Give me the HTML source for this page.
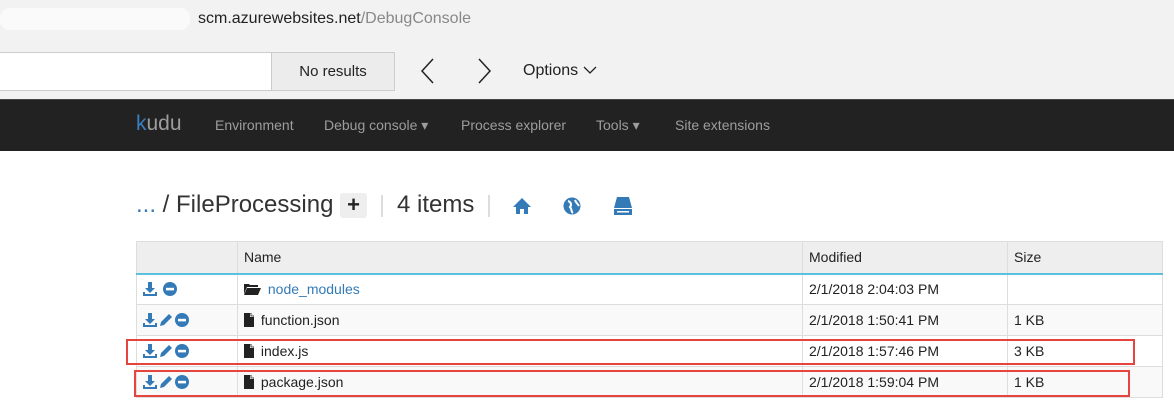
<!DOCTYPE html>
<html><head><style>
*{margin:0;padding:0;box-sizing:border-box}
body{width:1174px;height:415px;overflow:hidden;background:#fff;font-family:"Liberation Sans",Arial,sans-serif;position:relative}
.top{position:absolute;left:0;top:0;width:1174px;height:99px;background:#f2f2f2}
.url{position:absolute;left:198px;top:10px;font-size:16px;color:#222}
.url span{color:#888}
.blur{position:absolute;left:0;top:8px;width:190px;height:22px;background:#fafafa;border-radius:10px}
.search{position:absolute;left:-2px;top:52px;width:274px;height:39px;background:#fff;border:1px solid #ccc}
.nores{position:absolute;left:271px;top:52px;width:124px;height:39px;background:#ececec;border:1px solid #ccc;font-size:15px;color:#222;text-align:center;line-height:37px}
.opt{position:absolute;left:523px;top:62px;font-size:16px;color:#222}
.nav{position:absolute;left:0;top:99px;width:1174px;height:52px;background:#222;border-top:1px solid #444}
.nav div{position:absolute;top:17px;font-size:14px;color:#9d9d9d}
.crumb{position:absolute;top:191px;font-size:24px;color:#333}
.plus{position:absolute;left:340px;top:193px;width:27px;height:25px;background:#eee;border-radius:3px;font-size:22px;font-weight:bold;text-align:center;line-height:24px;color:#222}
.sep{position:absolute;top:195px;width:2px;height:22px;background:#ddd}
table{position:absolute;left:136px;top:241px;border-collapse:collapse;font-size:14px;color:#222}
td,th{border:1px solid #ddd;height:31px;padding:0 0 0 6px;text-align:left;font-weight:normal;vertical-align:middle}
th{background:#eee;height:32px;border-bottom:2px solid #5bc0de}
tr:nth-child(odd) td{background:#f9f9f9}
td svg{vertical-align:-2px;margin-right:2px}
.red{position:absolute;border:2px solid #e5443f}
</style></head><body>
<svg width="0" height="0" style="position:absolute">
<defs>
<g id="dl"><path d="M5 0H9V6H12L7 11L2 6H5Z" fill="#337ab7"/><path d="M0 10V14H14V10H12V12H2V10Z" fill="#337ab7"/></g>
<g id="pen"><path d="M1 13L2 9L10 1L13 4L5 12Z" fill="#337ab7"/></g>
<g id="rm"><circle cx="7" cy="7" r="7" fill="#337ab7"/><rect x="3" y="5.8" width="8" height="2.6" fill="#fff"/></g>
<g id="file"><path d="M0 0H7L10 3V14H0Z" fill="#222"/><path d="M6 0V4H10" fill="#fff"/><path d="M7 0V3H10" fill="#fff" stroke="#222" stroke-width=".8"/></g>
<g id="fold"><path d="M0 2H5L6 3H14V5H3L0 12Z" fill="#222"/><path d="M3 6H17L14 13H0Z" fill="#222"/></g>
</defs></svg>
<div class="top">
<div class="blur"></div>
<div class="url">scm.azurewebsites.net<span>/DebugConsole</span></div>
<div class="search"></div>
<div class="nores">No results</div>
<svg style="position:absolute;left:420px;top:58px" width="16" height="26"><path d="M13 1L2 13L13 25" stroke="#222" stroke-width="1.5" fill="none"/></svg>
<svg style="position:absolute;left:476px;top:58px" width="16" height="26"><path d="M3 1L14 13L3 25" stroke="#222" stroke-width="1.5" fill="none"/></svg>
<div class="opt">Options <svg width="14" height="9"><path d="M1 1L7 7L13 1" stroke="#222" stroke-width="1.3" fill="none"/></svg></div>
</div>
<div class="nav">
<div style="left:136px;top:12px;font-size:21px;color:#9d9d9d"><span style="color:#3a7fc0">k</span>udu</div>
<div style="left:215px">Environment</div>
<div style="left:324px">Debug console ▾</div>
<div style="left:461px">Process explorer</div>
<div style="left:596px">Tools ▾</div>
<div style="left:675px">Site extensions</div>
</div>
<div class="crumb" style="left:136px"><span style="color:#337ab7">...</span> / FileProcessing</div>
<div class="plus">+</div>
<div class="sep" style="left:381px"></div>
<div class="crumb" style="left:397px">4 items</div>
<div class="sep" style="left:488px"></div>
<svg style="position:absolute;left:512px;top:197px" width="20" height="18"><path d="M10 1L1 10H4V17H8V12H12V17H16V10H19Z" fill="#337ab7"/></svg>
<svg style="position:absolute;left:563px;top:197px" width="18" height="18"><circle cx="9" cy="9" r="8.5" fill="#337ab7"/><path d="M5 4C8 5 9 8 7 10C9 12 8 15 10 16M12 3C13 6 15 7 16 9" stroke="#fff" stroke-width="2" fill="none"/></svg>
<svg style="position:absolute;left:613px;top:196px" width="20" height="20"><path d="M4 1H16L19 12H1Z" fill="#337ab7"/><rect x="1" y="13" width="18" height="6" fill="#337ab7"/><rect x="4" y="15" width="12" height="1.5" fill="#fff"/></svg>
<table>
<tr><th style="width:101px"></th><th style="width:565px">Name</th><th style="width:205px">Modified</th><th style="width:155px">Size</th></tr>
<tr><td><svg width="14" height="14"><use href="#dl"/></svg> <svg width="14" height="14"><use href="#rm"/></svg></td><td><svg width="18" height="14"><use href="#fold"/></svg> <span style="color:#337ab7">node_modules</span></td><td>2/1/2018 2:04:03 PM</td><td></td></tr>
<tr><td><svg width="14" height="14"><use href="#dl"/></svg><svg width="14" height="14"><use href="#pen"/></svg><svg width="14" height="14"><use href="#rm"/></svg></td><td><svg width="11" height="14"><use href="#file"/></svg> function.json</td><td>2/1/2018 1:50:41 PM</td><td>1 KB</td></tr>
<tr><td><svg width="14" height="14"><use href="#dl"/></svg><svg width="14" height="14"><use href="#pen"/></svg><svg width="14" height="14"><use href="#rm"/></svg></td><td><svg width="11" height="14"><use href="#file"/></svg> index.js</td><td>2/1/2018 1:57:46 PM</td><td>3 KB</td></tr>
<tr><td><svg width="14" height="14"><use href="#dl"/></svg><svg width="14" height="14"><use href="#pen"/></svg><svg width="14" height="14"><use href="#rm"/></svg></td><td><svg width="11" height="14"><use href="#file"/></svg> package.json</td><td>2/1/2018 1:59:04 PM</td><td>1 KB</td></tr>
</table>
<div class="red" style="left:126px;top:339px;width:1009px;height:26px"></div>
<div class="red" style="left:134px;top:370px;width:996px;height:27px"></div>
</body></html>
